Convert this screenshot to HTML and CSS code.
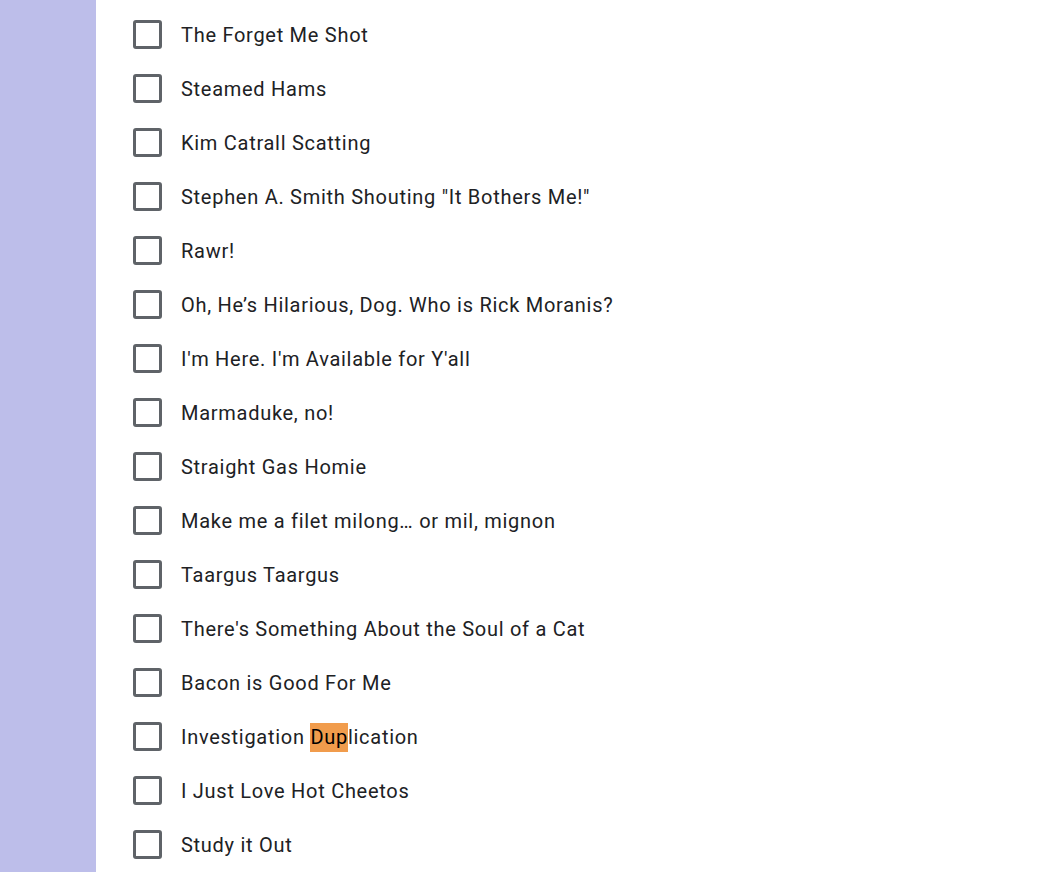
FILE: index.html
```html
<!DOCTYPE html>
<html>
<head>
<meta charset="utf-8">
<link rel="stylesheet" href="styles.css">
</head>
<body>
<div class="page">
  <aside class="strip"></aside>
  <main class="list">
    <div class="row"><span class="box"></span><span class="label">The Forget Me Shot</span></div>
    <div class="row"><span class="box"></span><span class="label">Steamed Hams</span></div>
    <div class="row"><span class="box"></span><span class="label">Kim Catrall Scatting</span></div>
    <div class="row"><span class="box"></span><span class="label">Stephen A. Smith Shouting "It Bothers Me!"</span></div>
    <div class="row"><span class="box"></span><span class="label">Rawr!</span></div>
    <div class="row"><span class="box"></span><span class="label">Oh, He’s Hilarious, Dog. Who is Rick Moranis?</span></div>
    <div class="row"><span class="box"></span><span class="label">I'm Here. I'm Available for Y'all</span></div>
    <div class="row"><span class="box"></span><span class="label">Marmaduke, no!</span></div>
    <div class="row"><span class="box"></span><span class="label">Straight Gas Homie</span></div>
    <div class="row"><span class="box"></span><span class="label">Make me a filet milong… or mil, mignon</span></div>
    <div class="row"><span class="box"></span><span class="label">Taargus Taargus</span></div>
    <div class="row"><span class="box"></span><span class="label">There's Something About the Soul of a Cat</span></div>
    <div class="row"><span class="box"></span><span class="label">Bacon is Good For Me</span></div>
    <div class="row"><span class="box"></span><span class="label">Investigation <mark class="hit">Dup</mark>lication</span></div>
    <div class="row"><span class="box"></span><span class="label">I Just Love Hot Cheetos</span></div>
    <div class="row"><span class="box"></span><span class="label">Study it Out</span></div>
  </main>
</div>
</body>
</html>
```

FILE: styles.css
```css
html, body {
  margin: 0;
  padding: 0;
  background: #ffffff;
}
.page {
  display: flex;
  height: 872px;
  overflow: hidden;
}
.strip {
  width: 96px;
  flex: none;
  background: #bdbeea;
}
.list {
  flex: 1;
  padding: 7px 0 0 37px;
  display: flex;
  flex-direction: column;
}
.row {
  height: 54px;
  display: flex;
  align-items: center;
  gap: 19px;
  flex: none;
}
.box {
  width: 29px;
  height: 29px;
  box-sizing: border-box;
  border: 3px solid #5f6368;
  border-radius: 3px;
  flex: none;
}
.label {
  font-family: Roboto, "Liberation Sans", sans-serif;
  font-size: 20px;
  color: #202124;
  letter-spacing: 0.72px;
  padding-top: 2px;
}
.hit {
  background: #f19c4c;
  color: #000;
  padding: 2px 0 3px;
}
```
